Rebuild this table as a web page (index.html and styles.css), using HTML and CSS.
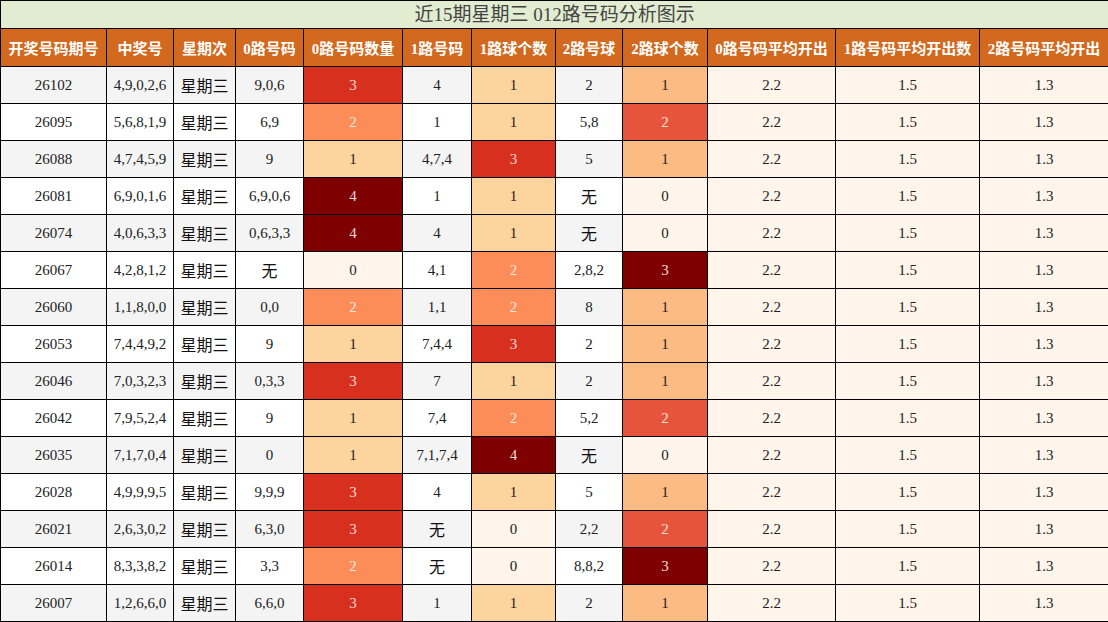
FILE: index.html
```html
<!DOCTYPE html>
<html lang="zh">
<head>
<meta charset="utf-8">
<title>近15期星期三 012路号码分析图示</title>
<link rel="stylesheet" href="styles.css">
</head>
<body>
<table class="grid">
<colgroup>
<col style="width:106px"><col style="width:67px"><col style="width:62px"><col style="width:68px"><col style="width:99px"><col style="width:69px"><col style="width:84px"><col style="width:67px"><col style="width:85px"><col style="width:128px"><col style="width:144px"><col style="width:129px">
</colgroup>
<thead>
<tr class="title-row"><th colspan="12" class="title">近15期星期三 012路号码分析图示</th></tr>
<tr class="head-row">
<th>开奖号码期号</th><th>中奖号</th><th>星期次</th><th>0路号码</th><th>0路号码数量</th><th>1路号码</th><th>1路球个数</th><th>2路号球</th><th>2路球个数</th><th>0路号码平均开出</th><th>1路号码平均开出数</th><th>2路号码平均开出</th>
</tr>
</thead>
<tbody id="rows"></tbody>
</table>
<script>
const data = [
["26102","4,9,0,2,6","9,0,6",3,"4",1,"2",1],
["26095","5,6,8,1,9","6,9",2,"1",1,"5,8",2],
["26088","4,7,4,5,9","9",1,"4,7,4",3,"5",1],
["26081","6,9,0,1,6","6,9,0,6",4,"1",1,"无",0],
["26074","4,0,6,3,3","0,6,3,3",4,"4",1,"无",0],
["26067","4,2,8,1,2","无",0,"4,1",2,"2,8,2",3],
["26060","1,1,8,0,0","0,0",2,"1,1",2,"8",1],
["26053","7,4,4,9,2","9",1,"7,4,4",3,"2",1],
["26046","7,0,3,2,3","0,3,3",3,"7",1,"2",1],
["26042","7,9,5,2,4","9",1,"7,4",2,"5,2",2],
["26035","7,1,7,0,4","0",1,"7,1,7,4",4,"无",0],
["26028","4,9,9,9,5","9,9,9",3,"4",1,"5",1],
["26021","2,6,3,0,2","6,3,0",3,"无",0,"2,2",2],
["26014","8,3,3,8,2","3,3",2,"无",0,"8,8,2",3],
["26007","1,2,6,6,0","6,6,0",3,"1",1,"2",1]
];
const tb = document.getElementById("rows");
function txt(v){ return v === "无" ? '<span class="cn">无</span>' : v; }
data.forEach((r, i) => {
  const tr = document.createElement("tr");
  tr.className = i % 2 === 0 ? "row odd" : "row";
  tr.innerHTML =
    `<td>${r[0]}</td><td>${r[1]}</td><td class="cn">星期三</td>` +
    `<td>${txt(r[2])}</td><td class="h4-${r[3]}">${r[3]}</td>` +
    `<td>${txt(r[4])}</td><td class="h4-${r[5]}">${r[5]}</td>` +
    `<td>${txt(r[6])}</td><td class="h3-${r[7]}">${r[7]}</td>` +
    `<td class="avg">2.2</td><td class="avg">1.5</td><td class="avg">1.3</td>`;
  tb.appendChild(tr);
});
</script>
</body>
</html>
```
FILE: styles.css
```css
html, body {
  margin: 0;
  padding: 0;
  overflow: hidden;
  background: #ffffff;
}
.grid {
  border-collapse: collapse;
  table-layout: fixed;
  width: 1109px;
  font-family: "Liberation Serif", "Noto Sans CJK SC", serif;
  font-size: 15px;
  color: #222;
}
.grid th, .grid td {
  border: 1px solid #000;
  padding: 0;
  text-align: center;
  vertical-align: middle;
  white-space: nowrap;
}
.title-row { height: 28px; }
.title {
  background: #e2ecd0;
  color: #444;
  font-weight: normal;
  font-size: 19px;
  line-height: 26px;
}
.head-row { height: 38px; }
.head-row th {
  background: #d2691e;
  color: #fff;
  font-weight: bold;
  font-size: 15px;
}
.row { height: 37px; background: #ffffff; }
.row.odd { background: #f4f4f4; }
.cn {
  font-family: "Noto Sans CJK SC", sans-serif;
  font-size: 16px;
  color: #111;
}
.avg { background: #fff5eb; }
.h4-0, .h3-0 { background: #fff5eb; }
.h4-1 { background: #fdd49e; }
.h4-2 { background: #fc8d59; color: #fde8df; }
.h4-3 { background: #d7301f; color: #fbdcd6; }
.h4-4 { background: #7f0000; color: #f2dcdc; }
.h3-1 { background: #fdbb84; }
.h3-2 { background: #e6553b; color: #fde0d8; }
.h3-3 { background: #7f0000; color: #f2dcdc; }
```
